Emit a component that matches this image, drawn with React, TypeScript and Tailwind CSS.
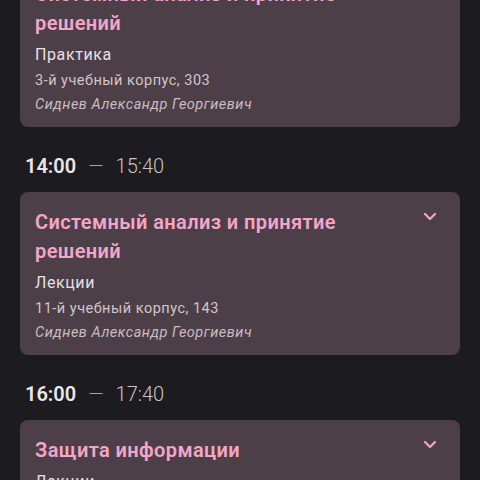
import React from 'react';

type Lesson = {
  start: string;
  end: string;
  title: string;
  kind: string;
  room: string;
  teacher: string;
};

const lessons: Lesson[] = [
  {
    start: '12:00',
    end: '13:40',
    title: 'Системный анализ и принятие решений',
    kind: 'Практика',
    room: '3-й учебный корпус, 303',
    teacher: 'Сиднев Александр Георгиевич',
  },
  {
    start: '14:00',
    end: '15:40',
    title: 'Системный анализ и принятие решений',
    kind: 'Лекции',
    room: '11-й учебный корпус, 143',
    teacher: 'Сиднев Александр Георгиевич',
  },
  {
    start: '16:00',
    end: '17:40',
    title: 'Защита информации',
    kind: 'Лекции',
    room: '11-й учебный корпус, 143',
    teacher: 'Сиднев Александр Георгиевич',
  },
];

const Chevron = () => (
  <svg width="24" height="24" viewBox="0 0 24 24" fill="none" className="shrink-0">
    <path d="M7 10l5 5 5-5" stroke="#f4a6c9" strokeWidth="2.2" strokeLinecap="round" strokeLinejoin="round" />
  </svg>
);

const LessonCard = ({ lesson }: { lesson: Lesson }) => (
  <div className="rounded-lg bg-[#4d3f47] pl-[15px] pr-[18px] pt-4 pb-3">
    <div className="flex items-start gap-4">
      <h3 className="flex-1 text-[20px] leading-[29px] font-semibold tracking-[0.4px] text-[#f4a6c9]">
        {lesson.title}
      </h3>
      <div className="-mt-[4px]">
        <Chevron />
      </div>
    </div>
    <p className="mt-[5px] text-[16px] leading-6 tracking-[0.6px] text-[#e8e0e5]">{lesson.kind}</p>
    <p className="mt-[4px] text-[14.5px] leading-5 tracking-[0.5px] text-[#d2c5cc]">{lesson.room}</p>
    <p className="mt-1 text-[14.5px] leading-5 italic tracking-[0.5px] text-[#c9bcc4]">{lesson.teacher}</p>
  </div>
);

export default function App() {
  return (
    <div className="h-[480px] overflow-hidden bg-[#1c1b1f] font-['Roboto',sans-serif]">
      <div className="-mt-[101px] px-5">
        {lessons.map((l, i) => (
          <div key={i}>
            <div className="flex items-center pl-[5px] pt-[25px] pb-3 text-[20px] leading-7">
              <span className="font-semibold text-[#ece6ea]">{l.start}</span>
              <span className="ml-3 font-light text-[#a9a3a8]">—</span>
              <span className="ml-3 font-light text-[#c8c2c7]">{l.end}</span>
            </div>
            <LessonCard lesson={l} />
          </div>
        ))}
      </div>
    </div>
  );
}
